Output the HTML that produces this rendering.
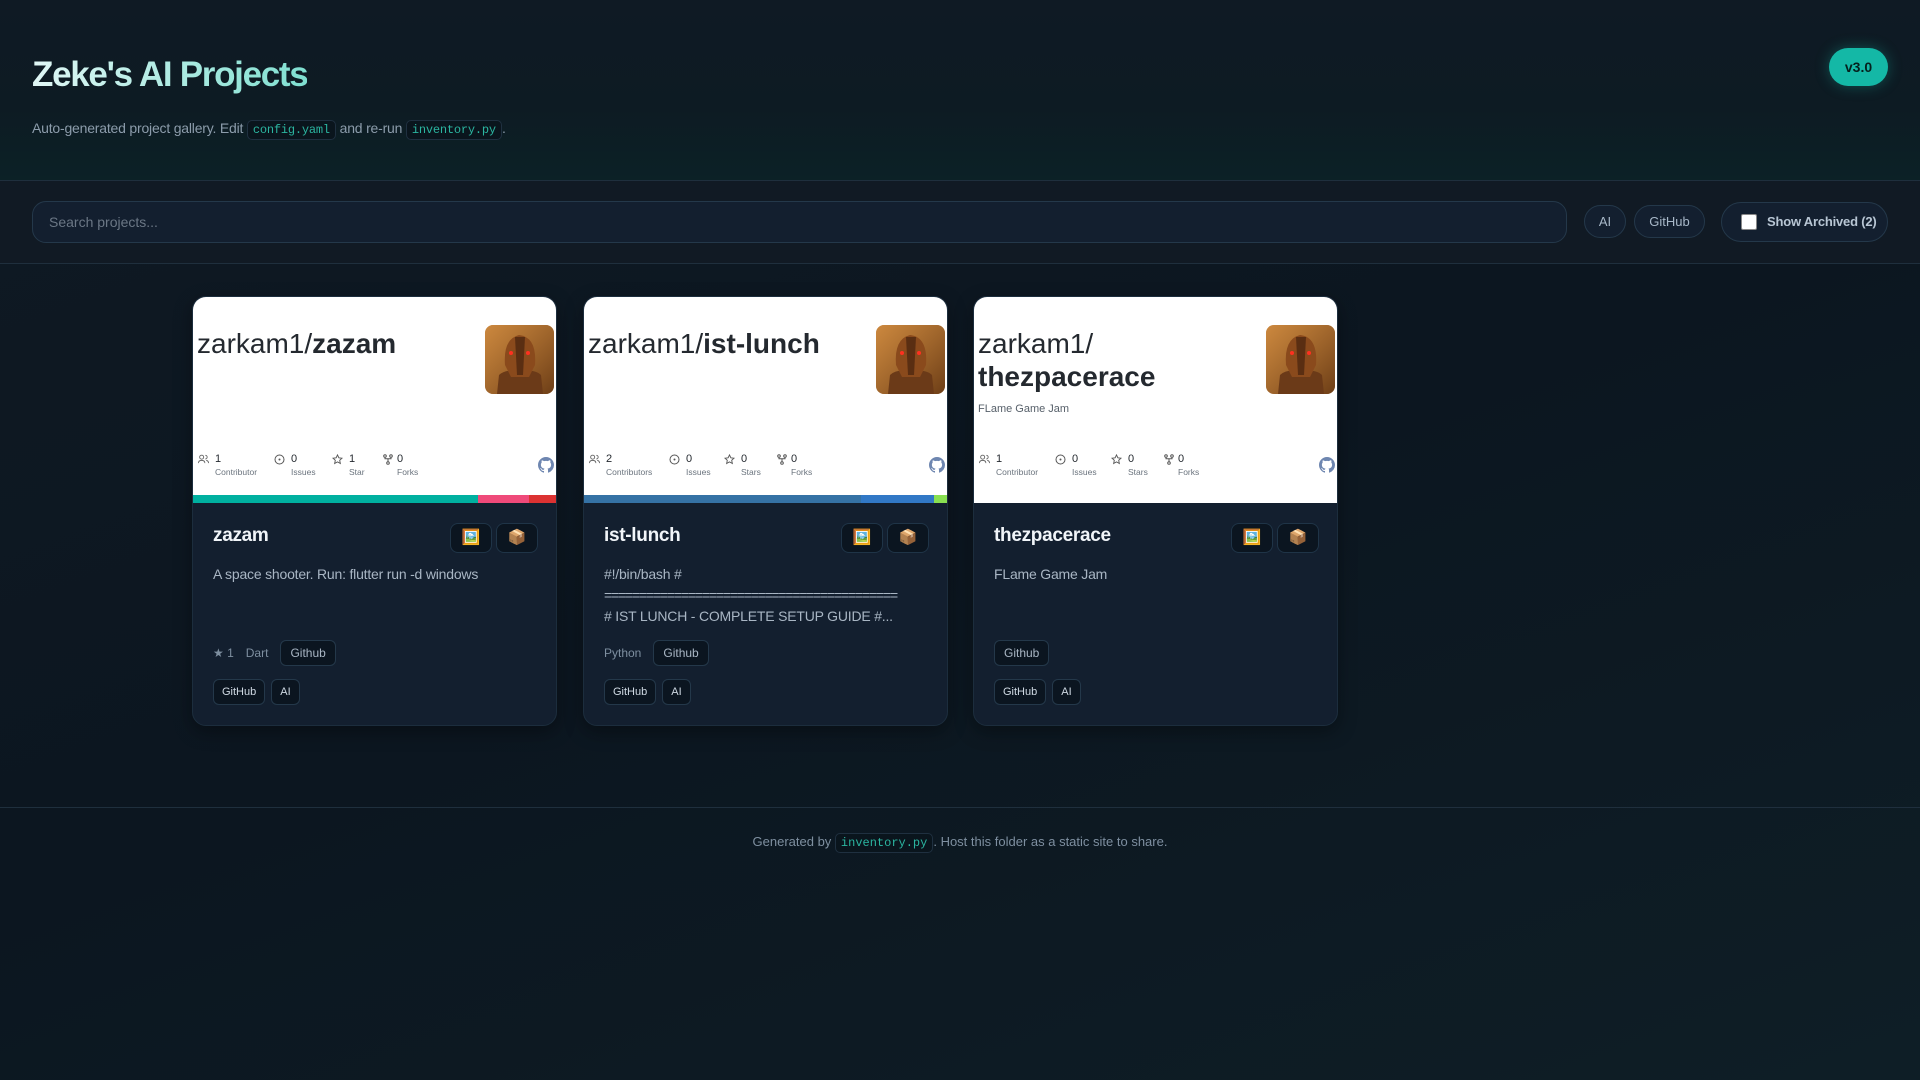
<!DOCTYPE html>
<html><head><meta charset="utf-8"><style>
*{box-sizing:border-box;margin:0;padding:0}
body{width:1920px;height:1080px;overflow:hidden;font-family:"Liberation Sans",Roboto,sans-serif;background:linear-gradient(160deg,#0f1a24 0%,#0c1620 50%,#0e1e26 100%);color:#cbd5e1;position:relative}
.hdr{position:absolute;left:0;top:0;width:1920px;height:181px;background:linear-gradient(180deg,#0f1a24 0%,#0d1b23 60%,#0c2126 100%);border-bottom:1px solid #1f2f3d}
h1{position:absolute;left:32px;top:55px;font-size:35px;font-weight:700;letter-spacing:-1.3px;background:linear-gradient(90deg,#e0f7f5,#7fdfd0);-webkit-background-clip:text;color:transparent}
.sub{position:absolute;left:32px;top:120px;font-size:14px;color:#8c9cab;letter-spacing:-0.2px}
code{font-family:"Liberation Mono",monospace;font-size:12px;color:#2bb5a0;background:#0a151d;border:1px solid #1f3040;border-radius:5px;padding:2px 5px}
.ver{position:absolute;left:1829px;top:48px;width:59px;height:38px;border-radius:19px;background:#14b8a6;color:#05201d;font-weight:700;font-size:14px;text-align:center;line-height:38px;box-shadow:0 0 14px rgba(20,184,166,.35)}
.bar{position:absolute;left:0;top:181px;width:1920px;height:83px;background:#111a24;border-bottom:1px solid #1f2f3d}
.search{position:absolute;left:32px;top:20px;width:1535px;height:42px;border:1px solid #24384a;border-radius:14px;background:#131f2f;font-size:14px;color:#6b7785;padding:12px 16px}
.chip{position:absolute;top:24px;height:33px;border:1px solid #24384a;border-radius:17px;background:#131f2f;font-size:13px;color:#a8b8c8;text-align:center;line-height:31px}
.arch{position:absolute;left:1721px;top:21px;width:167px;height:40px;border:1px solid #24384a;border-radius:20px;background:#131f2f;font-size:13px;font-weight:700;color:#b8c6d4;line-height:38px;padding-left:45px;letter-spacing:-0.2px}
.arch i{position:absolute;left:19px;top:11px;width:16px;height:16px;background:#fff;border-radius:2px;border:1px solid #888}
.card{position:absolute;top:296px;width:365px;height:430px;border-radius:14px;background:#131f2f;border:1px solid #1c2d3d;overflow:hidden;box-shadow:0 6px 18px rgba(0,0,0,.35)}
.img{position:absolute;left:0;top:0;width:365px;height:206px;background:#fff}
.rt{position:absolute;left:4px;top:30px;font-size:28px;color:#24292f;line-height:33px;width:280px}
.rt b{font-weight:700}
.av{position:absolute;left:292px;top:28px;width:69px;height:69px;border-radius:8px;overflow:hidden}
.fl{position:absolute;left:4px;top:106px;font-size:11px;color:#57606a}
.st{position:absolute;top:156px;font-size:11px;color:#24292f}
.st s{text-decoration:none;position:absolute;left:17px;top:14px;font-size:8.5px;color:#6a737d;white-space:nowrap}
.st svg{position:absolute;left:0;top:1px}
.st span{position:absolute;left:17px;top:0}
.gh{position:absolute;left:345px;top:160px}
.cb{position:absolute;left:0;top:198px;height:8px;width:365px;display:flex}
.ct{position:absolute;left:20px;top:228px;font-size:19px;font-weight:700;color:#f1f5f9;letter-spacing:-0.3px}
.btn{position:absolute;top:226px;width:42px;height:30px;border:1px solid #1f3447;border-radius:8px;background:#0b1520;font-size:15px;text-align:center;line-height:28px}
.desc{position:absolute;left:20px;top:267px;font-size:14px;color:#a9b6c4;line-height:21px;width:325px;overflow:hidden;white-space:nowrap;letter-spacing:-0.2px}
.meta{position:absolute;left:20px;top:343px;font-size:12px;color:#7e8fa0;display:flex;align-items:center;gap:12px}
.tag{border:1px solid #24384a;border-radius:6px;background:#0b1520;color:#a9b6c4;font-size:12px;padding:5px 9px}
.tags{position:absolute;left:20px;top:382px;display:flex;gap:6px}
.tags .tag{font-size:11px;color:#d0dae4;padding:6px 8px}
.foot{position:absolute;left:0;top:807px;width:1920px;border-top:1px solid #1f2f3d;text-align:center;padding-top:26px;font-size:13px;color:#7e8fa0}
</style></head><body>
<div class="hdr">
<h1>Zeke's AI Projects</h1>
<div class="sub">Auto-generated project gallery. Edit <code>config.yaml</code> and re-run <code>inventory.py</code>.</div>
<div class="ver">v3.0</div>
</div>
<div class="bar">
<div class="search">Search projects...</div>
<div class="chip" style="left:1584px;width:42px">AI</div>
<div class="chip" style="left:1634px;width:71px">GitHub</div>
<div class="arch"><i></i>Show Archived (2)</div>
</div>

<svg width="0" height="0" style="position:absolute"><defs>
<symbol id="rob" viewBox="0 0 69 69"><rect width="69" height="69" fill="#b8702c"/><rect width="69" height="69" fill="url(#g1)"/><path d="M12 69 L14 50 Q20 44 34 46 Q50 44 56 50 L58 69Z" fill="#6b3a18"/><path d="M20 40 Q18 14 34 10 Q52 12 50 40 L44 52 L26 52Z" fill="#8a4a1c"/><path d="M30 12 L32 50 L38 50 L40 12Z" fill="#5a2e12"/><circle cx="26" cy="28" r="2" fill="#ff3020"/><circle cx="43" cy="28" r="2" fill="#ff3020"/></symbol>
<linearGradient id="g1" x1="0" y1="0" x2="1" y2="1"><stop offset="0" stop-color="#e0a050" stop-opacity=".5"/><stop offset="1" stop-color="#3a1c08" stop-opacity=".6"/></linearGradient>
<symbol id="ghi" viewBox="0 0 16 16"><path fill="#6e86b0" d="M8 0C3.58 0 0 3.58 0 8c0 3.540 2.29 6.53 5.47 7.59.4.07.55-.17.55-.38v-1.33c-2.23.48-2.7-1.07-2.7-1.070-.36-.92-.89-1.17-.89-1.17-.73-.5.05-.49.05-.49.8.06 1.23.83 1.23.83.72 1.22 1.87.87 2.33.66.07-.52.28-.87.5-1.07-1.78-.2-3.64-.89-3.64-3.95 0-.87.31-1.59.82-2.150-.08-.2-.36-1.02.08-2.12 0 0 .67-.21 2.2.82A7.6 7.6 0 0 1 8 3.87c.68 0 1.36.09 2 .27 1.53-1.04 2.2-.82 2.2-.82.44 1.1.16 1.92.08 2.12.51.56.82 1.27.82 2.15 0 3.07-1.87 3.75-3.65 3.95.29.25.54.73.54 1.48v2.2c0 .21.15.46.55.38A8 8 0 0 0 16 8c0-4.42-3.58-8-8-8z"/></symbol>
</defs></svg>

<div class="card" style="left:192px">
<div class="img"><div class="rt">zarkam1/<b>zazam</b></div><svg class="av"><use href="#rob"/></svg>
<div class="st" style="left:5px"><svg width="11" height="10" viewBox="0 0 12 10"><circle cx="4" cy="3" r="2.2" fill="none" stroke="#666" stroke-width="1"/><path d="M0.5 9.5c0-2 1.5-3 3.5-3s3.5 1 3.5 3M8 1a2 2 0 010 4M9 6.5c1.5.3 2.5 1.2 2.5 3" fill="none" stroke="#666"/></svg><span>1</span><s>Contributor</s></div>
<div class="st" style="left:81px"><svg width="11" height="11"><circle cx="5.5" cy="5.5" r="4.5" fill="none" stroke="#555"/><circle cx="5.5" cy="5.5" r="1" fill="#555"/></svg><span>0</span><s>Issues</s></div>
<div class="st" style="left:139px"><svg width="11" height="11" viewBox="0 0 12 12"><path d="M6 1l1.5 3.2 3.4.4-2.5 2.3.7 3.4L6 8.6 2.9 10.3l.7-3.4L1.1 4.6l3.4-.4z" fill="none" stroke="#555"/></svg><span>1</span><s>Star</s></div>
<div class="st" style="left:190px"><svg width="10" height="11" viewBox="0 0 10 11"><circle cx="2" cy="2" r="1.3" fill="none" stroke="#555"/><circle cx="8" cy="2" r="1.3" fill="none" stroke="#555"/><circle cx="5" cy="9" r="1.3" fill="none" stroke="#555"/><path d="M2 3.3v1.5h6V3.3M5 4.8v3" fill="none" stroke="#555"/></svg><span style="left:14px">0</span><s style="left:14px">Forks</s></div>
<svg class="gh" width="16" height="16"><use href="#ghi"/></svg>
<div class="cb"><div style="width:285px;background:#00b0a0"></div><div style="width:51px;background:#ef4a7a"></div><div style="flex:1;background:#dc3232"></div></div></div>
<div class="ct">zazam</div><div class="btn" style="left:257px">🖼️</div><div class="btn" style="left:303px">📦</div>
<div class="desc">A space shooter. Run: flutter run -d windows</div>
<div class="meta"><span>★ 1</span><span>Dart</span><span class="tag">Github</span></div>
<div class="tags"><span class="tag">GitHub</span><span class="tag">AI</span></div>
</div>

<div class="card" style="left:583px">
<div class="img"><div class="rt">zarkam1/<b>ist-lunch</b></div><svg class="av"><use href="#rob"/></svg>
<div class="st" style="left:5px"><svg width="11" height="10" viewBox="0 0 12 10"><circle cx="4" cy="3" r="2.2" fill="none" stroke="#666" stroke-width="1"/><path d="M0.5 9.5c0-2 1.5-3 3.5-3s3.5 1 3.5 3M8 1a2 2 0 010 4M9 6.5c1.5.3 2.5 1.2 2.5 3" fill="none" stroke="#666"/></svg><span>2</span><s>Contributors</s></div>
<div class="st" style="left:85px"><svg width="11" height="11"><circle cx="5.5" cy="5.5" r="4.5" fill="none" stroke="#555"/><circle cx="5.5" cy="5.5" r="1" fill="#555"/></svg><span>0</span><s>Issues</s></div>
<div class="st" style="left:140px"><svg width="11" height="11" viewBox="0 0 12 12"><path d="M6 1l1.5 3.2 3.4.4-2.5 2.3.7 3.4L6 8.6 2.9 10.3l.7-3.4L1.1 4.6l3.4-.4z" fill="none" stroke="#555"/></svg><span>0</span><s>Stars</s></div>
<div class="st" style="left:193px"><svg width="10" height="11" viewBox="0 0 10 11"><circle cx="2" cy="2" r="1.3" fill="none" stroke="#555"/><circle cx="8" cy="2" r="1.3" fill="none" stroke="#555"/><circle cx="5" cy="9" r="1.3" fill="none" stroke="#555"/><path d="M2 3.3v1.5h6V3.3M5 4.8v3" fill="none" stroke="#555"/></svg><span style="left:14px">0</span><s style="left:14px">Forks</s></div>
<svg class="gh" width="16" height="16"><use href="#ghi"/></svg>
<div class="cb"><div style="width:277px;background:#3572a5"></div><div style="width:73px;background:#3178c6"></div><div style="flex:1;background:#89e051"></div></div></div>
<div class="ct">ist-lunch</div><div class="btn" style="left:257px">🖼️</div><div class="btn" style="left:303px">📦</div>
<div class="desc">#!/bin/bash #<br><span style="letter-spacing:-1.2px">==========================================</span><br># IST LUNCH - COMPLETE SETUP GUIDE #...</div>
<div class="meta"><span>Python</span><span class="tag">Github</span></div>
<div class="tags"><span class="tag">GitHub</span><span class="tag">AI</span></div>
</div>

<div class="card" style="left:973px">
<div class="img"><div class="rt">zarkam1/<br><b>thezpacerace</b></div><svg class="av"><use href="#rob"/></svg>
<div class="fl">FLame Game Jam</div>
<div class="st" style="left:5px"><svg width="11" height="10" viewBox="0 0 12 10"><circle cx="4" cy="3" r="2.2" fill="none" stroke="#666" stroke-width="1"/><path d="M0.5 9.5c0-2 1.5-3 3.5-3s3.5 1 3.5 3M8 1a2 2 0 010 4M9 6.5c1.5.3 2.5 1.2 2.5 3" fill="none" stroke="#666"/></svg><span>1</span><s>Contributor</s></div>
<div class="st" style="left:81px"><svg width="11" height="11"><circle cx="5.5" cy="5.5" r="4.5" fill="none" stroke="#555"/><circle cx="5.5" cy="5.5" r="1" fill="#555"/></svg><span>0</span><s>Issues</s></div>
<div class="st" style="left:137px"><svg width="11" height="11" viewBox="0 0 12 12"><path d="M6 1l1.5 3.2 3.4.4-2.5 2.3.7 3.4L6 8.6 2.9 10.3l.7-3.4L1.1 4.6l3.4-.4z" fill="none" stroke="#555"/></svg><span>0</span><s>Stars</s></div>
<div class="st" style="left:190px"><svg width="10" height="11" viewBox="0 0 10 11"><circle cx="2" cy="2" r="1.3" fill="none" stroke="#555"/><circle cx="8" cy="2" r="1.3" fill="none" stroke="#555"/><circle cx="5" cy="9" r="1.3" fill="none" stroke="#555"/><path d="M2 3.3v1.5h6V3.3M5 4.8v3" fill="none" stroke="#555"/></svg><span style="left:14px">0</span><s style="left:14px">Forks</s></div>
<svg class="gh" width="16" height="16"><use href="#ghi"/></svg></div>
<div class="ct">thezpacerace</div><div class="btn" style="left:257px">🖼️</div><div class="btn" style="left:303px">📦</div>
<div class="desc">FLame Game Jam</div>
<div class="meta"><span class="tag">Github</span></div>
<div class="tags"><span class="tag">GitHub</span><span class="tag">AI</span></div>
</div>

<div class="foot">Generated by <code>inventory.py</code>. Host this folder as a static site to share.</div>
</body></html>
